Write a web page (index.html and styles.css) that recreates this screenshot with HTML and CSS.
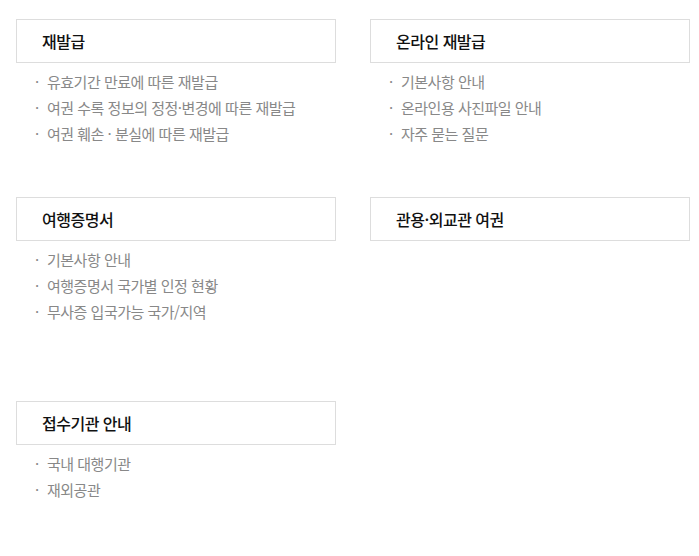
FILE: index.html
```html
<!DOCTYPE html>
<html lang="ko">

<head>
    <meta charset="UTF-8">
    <meta name="viewport" content="width=device-width, initial-scale=1.0">
    <title>여권 안내</title>
    <link rel="stylesheet" href="styles.css">
</head>

<body>

    <div class="menu-grid">
        <div class="menu-section">
            <h3 class="menu-title">재발급</h3>
            <ul class="menu-list">
                <li>유효기간 만료에 따른 재발급</li>
                <li>여권 수록 정보의 정정·변경에 따른 재발급</li>
                <li>여권 훼손 · 분실에 따른 재발급</li>
            </ul>
        </div>
        <div class="menu-section">
            <h3 class="menu-title">온라인 재발급</h3>
            <ul class="menu-list">
                <li>기본사항 안내</li>
                <li>온라인용 사진파일 안내</li>
                <li>자주 묻는 질문</li>
            </ul>
        </div>

        <div class="menu-section tall">
            <h3 class="menu-title">여행증명서</h3>
            <ul class="menu-list">
                <li>기본사항 안내</li>
                <li>여행증명서 국가별 인정 현황</li>
                <li>무사증 입국가능 국가/지역</li>
            </ul>
        </div>
        <div class="menu-section tall">
            <h3 class="menu-title">관용·외교관 여권</h3>
        </div>

        <div class="menu-section">
            <h3 class="menu-title">접수기관 안내</h3>
            <ul class="menu-list">
                <li>국내 대행기관</li>
                <li>재외공관</li>
            </ul>
        </div>
    </div>

</body>

</html>
```

FILE: styles.css
```css
* {
    margin: 0;
    padding: 0;
    box-sizing: border-box;
}

body {
    font-family: "Noto Sans CJK KR", "Noto Sans", sans-serif;
    background-color: #fff;
    color: #222;
}

.menu-grid {
    display: grid;
    grid-template-columns: 320px 320px;
    column-gap: 34px;
    padding: 19px 0 0 16px;
}

.menu-section {
    min-height: 178px;
}

.menu-section.tall {
    min-height: 204px;
}

.menu-title {
    height: 44px;
    border: 1px solid #ddd;
    padding: 0 25px;
    font-size: 16px;
    font-weight: 500;
    line-height: 42px;
    letter-spacing: -0.5px;
    color: #111;
}

/* list items */
.menu-list {
    list-style: none;
    margin-top: 6px;
}

.menu-list li {
    position: relative;
    padding-left: 31px;
    font-size: 15px;
    line-height: 26px;
    letter-spacing: -0.5px;
    color: #888;
}

.menu-list li::before {
    content: "·";
    position: absolute;
    left: 19px;
    top: 0;
    color: #888;
}
```
